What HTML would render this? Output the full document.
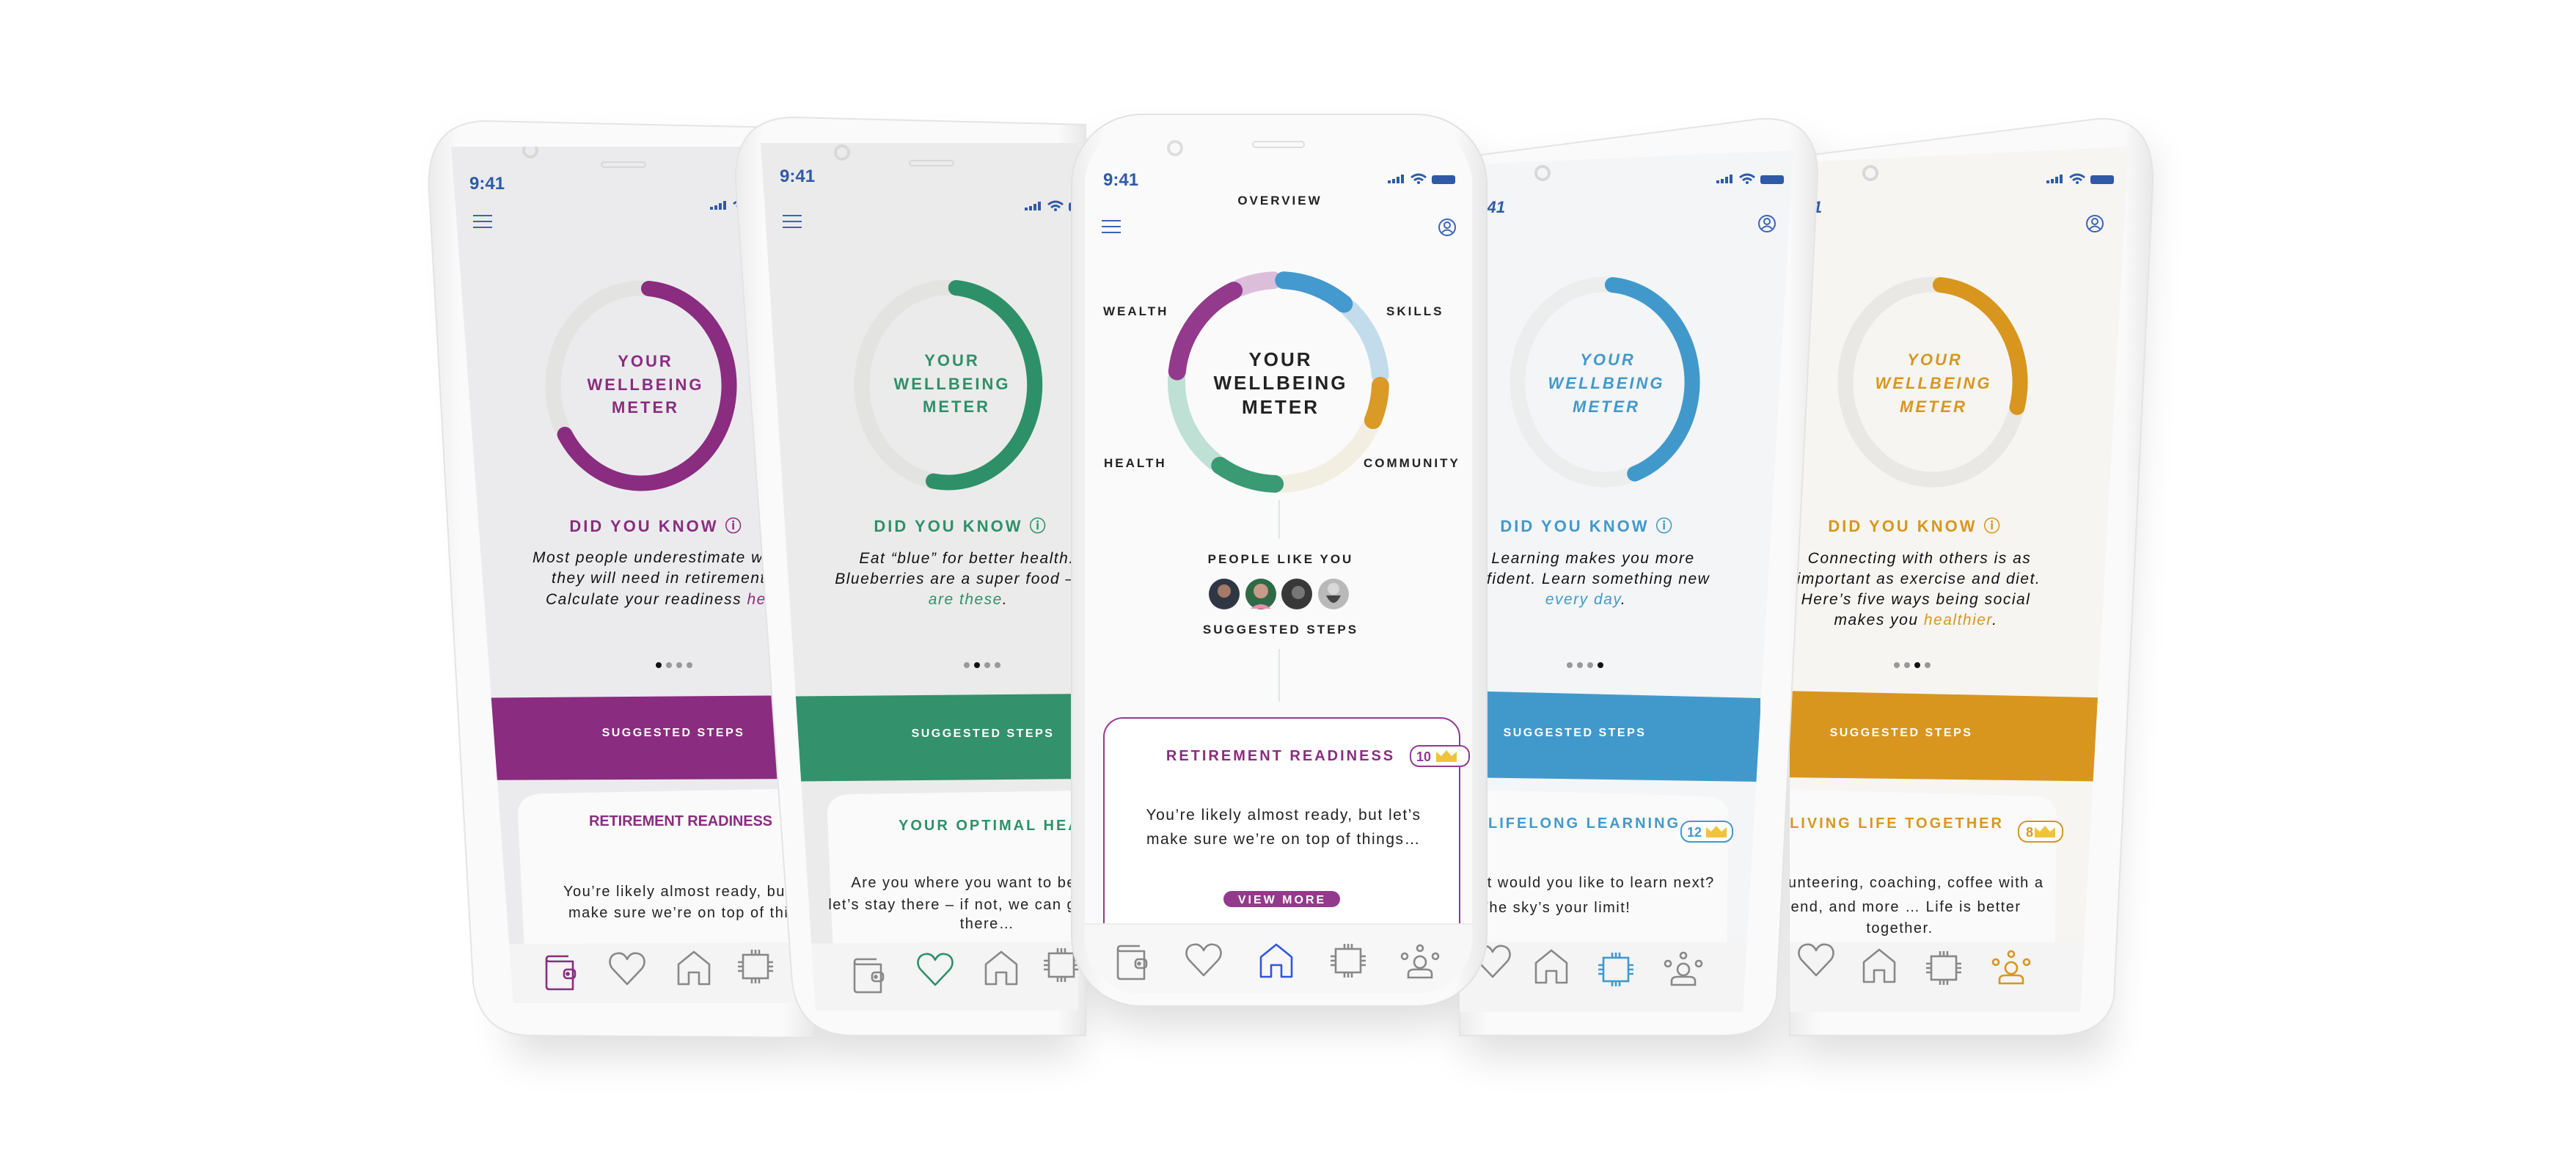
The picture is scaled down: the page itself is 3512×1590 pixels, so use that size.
<!DOCTYPE html>
<html><head><meta charset="utf-8"><style>
html,body{margin:0;padding:0;background:#fff;}
svg{display:block;}
text{font-family:"Liberation Sans","DejaVu Sans",sans-serif;}
</style></head><body>
<svg width="3512" height="1590" viewBox="0 0 3512 1590" xmlns="http://www.w3.org/2000/svg">
<defs>
<filter id="sh" x="-30%" y="-30%" width="160%" height="160%"><feGaussianBlur stdDeviation="28"/></filter>
<linearGradient id="fr" x1="0" y1="0" x2="1" y2="0"><stop offset="0" stop-color="#ececec"/><stop offset=".08" stop-color="#fafafa"/><stop offset=".92" stop-color="#fafafa"/><stop offset="1" stop-color="#e8e8e8"/></linearGradient>
<g id="wallet" fill="none" stroke-width="2.6" stroke-linejoin="round"><path d="M8,-22 H-18 Q-22,-22 -22,-18 V19 Q-22,23 -18,23 H14 V-15 H-18 Q-22,-15 -22,-18"/><rect x="2" y="-4" width="15" height="12" rx="4"/><circle cx="7" cy="2" r="1.5"/></g>
<g id="heart" fill="none" stroke-width="2.6" stroke-linejoin="round"><path d="M0,20 L-19,0 C-27,-8 -24,-21 -13,-22 C-6,-23 -2,-18 0,-14 C2,-18 6,-23 13,-22 C24,-21 27,-8 19,0 Z"/></g>
<g id="home" fill="none" stroke-width="2.6" stroke-linejoin="round"><path d="M-21,22 V-5 L0,-22 L21,-5 V22 H7 V6 H-7 V22 Z"/></g>
<g id="chip" fill="none" stroke-width="2.6"><rect x="-17" y="-16" width="34" height="32"/><path d="M-5,-23V-16M0,-23V-16M5,-23V-16M-5,16V23M0,16V23M5,16V23M-24,-6H-17M-24,0H-17M-24,6H-17M17,-6H24M17,0H24M17,6H24"/></g>
<g id="people" fill="none" stroke-width="2.6"><circle cx="0" cy="2" r="8"/><path d="M-16,23 V18 Q-16,12 -8,12 H8 Q16,12 16,18 V23 Z"/><circle cx="-21" cy="-6" r="4"/><circle cx="0" cy="-17" r="4"/><circle cx="21" cy="-6" r="4"/></g>
<g id="ham" stroke="#3a64b8" stroke-width="2"><path d="M-13,-8H13M-13,0H13M-13,8H13"/></g>
<g id="prof" fill="none" stroke="#3a64b8" stroke-width="2"><circle r="11"/><circle cy="-3" r="4"/><path d="M-7,7 Q0,0 7,7"/></g>
<g id="stat" fill="#2e5aa8"><rect x="0" y="2" width="4" height="4"/><rect x="6" y="0" width="4" height="6"/><rect x="12" y="-3" width="4" height="9"/><rect x="18" y="-6" width="4" height="12"/><path d="M32,-2 Q42,-10 52,-2" stroke="#2e5aa8" stroke-width="3" fill="none"/><path d="M36,2 Q42,-3 48,2" stroke="#2e5aa8" stroke-width="3" fill="none"/><circle cx="42" cy="5" r="2"/><rect x="60" y="-5" width="32" height="12" rx="3"/></g>
<g id="crown" fill="#f0c43a"><path d="M-14,8 L-14,-6 L-7,0 L0,-8 L7,0 L14,-6 L14,8 Z"/></g>
<clipPath id="c1"><path d="M615,200 L1100,200 L1100,1368 L700,1368 Z"/></clipPath>
<clipPath id="c2"><path d="M1037,195 L1470,195 L1470,1378 L1112,1378 Z"/></clipPath>
<clipPath id="c4"><path d="M1990,225 L2445,205 L2376,1380 L1990,1380 Z"/></clipPath>
<clipPath id="c5"><path d="M2440,222 L2902,200 L2836,1380 L2440,1380 Z"/></clipPath>
<clipPath id="cc"><rect x="1479" y="175" width="528" height="1180" rx="75"/></clipPath>
</defs>

<!-- shadows -->
<g filter="url(#sh)" fill="#000" opacity=".13">
<path d="M620,200 L1100,210 L1100,1440 L700,1440 Z"/>
<path d="M1040,200 L1470,210 L1470,1440 L1110,1440 Z"/>
<path d="M2000,240 L2470,200 L2420,1440 L2000,1440 Z"/>
<path d="M2450,240 L2930,200 L2870,1440 L2450,1440 Z"/>
<rect x="1470" y="190" width="550" height="1210" rx="90"/>
</g>

<!-- ============ PHONE 1 (purple) ============ -->
<path d="M660,165 L1110,175 L1110,1415 L720,1412 Q655,1410 645,1340 L585,260 Q580,168 660,165 Z" fill="url(#fr)" stroke="#e4e4e4" stroke-width="2"/>
<g clip-path="url(#c1)">
<rect x="600" y="190" width="520" height="1200" fill="#ebebed"/>
<circle cx="723" cy="205" r="9" fill="none" stroke="#d8d8d8" stroke-width="4"/>
<rect x="820" y="221" width="60" height="7" rx="3.5" fill="none" stroke="#d8d8d8" stroke-width="2"/>
<text x="640" y="258" font-size="24" font-weight="bold" fill="#2e5aa8">9:41</text>
<use href="#ham" x="658" y="302"/>
<use href="#stat" x="968" y="280"/>
<ellipse cx="874" cy="526" rx="120" ry="133" fill="none" stroke="#e3e3e1" stroke-width="21"/>
<path d="M884.5,393.5 A120,133 0 1 1 770.1,592.5" fill="none" stroke="#8a2c80" stroke-width="21" stroke-linecap="round"/>
<g fill="#8a2c80" font-size="22" font-weight="bold" text-anchor="middle" letter-spacing="3"><text x="880" y="500">YOUR</text><text x="880" y="532">WELLBEING</text><text x="880" y="563">METER</text></g>
<text x="895" y="725" font-size="22" font-weight="bold" fill="#8a2c80" text-anchor="middle" letter-spacing="3">DID YOU KNOW ⓘ</text>
<g font-size="21" font-style="italic" fill="#111" letter-spacing="1.5"><text x="726" y="767">Most people underestimate what</text><text x="752" y="795">they will need in retirement.</text><text x="744" y="824">Calculate your readiness <tspan fill="#8a2c80">here</tspan>.</text></g>
<circle cx="898" cy="907" r="4" fill="#111"/><circle cx="912" cy="907" r="4" fill="#999"/><circle cx="926" cy="907" r="4" fill="#999"/><circle cx="940" cy="907" r="4" fill="#999"/>
<path d="M600,952 L1110,948 L1110,1062 L600,1064 Z" fill="#8a2c80"/>
<text x="918" y="1004" font-size="16" font-weight="bold" fill="#fff" text-anchor="middle" letter-spacing="2.5">SUGGESTED STEPS</text>
<path d="M706,1110 Q706,1084 740,1082 L1110,1075 L1110,1400 L720,1400 Z" fill="#fafafa"/>
<text x="803" y="1126" font-size="20" font-weight="bold" fill="#8a2c80" letter-spacing="3" textLength="253">RETIREMENT READINESS</text>
<g font-size="20" fill="#222" letter-spacing="1.5"><text x="768" y="1222">You’re likely almost ready, but let’s</text><text x="775" y="1251">make sure we’re on top of things…</text></g>
<path d="M600,1288 L1110,1285 L1110,1400 L600,1400 Z" fill="#f4f4f4"/>
<g stroke="#888"><use href="#wallet" x="767" y="1326" stroke="#8a2c80"/><use href="#heart" x="855" y="1322"/><use href="#home" x="946" y="1320"/><use href="#chip" x="1030" y="1318"/></g>
</g>

<!-- ============ PHONE 5 (orange) ============ -->
<path d="M2440,215 L2860,162 Q2937,158 2935,250 L2882,1360 Q2872,1412 2800,1412 L2440,1412 Z" fill="url(#fr)" stroke="#e4e4e4" stroke-width="2"/>
<g clip-path="url(#c5)">
<rect x="2430" y="190" width="500" height="1200" fill="#f6f5f1"/>
<circle cx="2550" cy="236" r="9" fill="none" stroke="#d8d8d8" stroke-width="4"/>
<rect x="2635" y="200" width="58" height="7" rx="3.5" fill="none" stroke="#d8d8d8" stroke-width="2"/>
<text x="2440" y="290" font-size="22" font-weight="bold" font-style="italic" fill="#2e5aa8">9:41</text>
<use href="#stat" x="2790" y="244"/>
<use href="#prof" x="2856" y="305"/>
<ellipse cx="2635" cy="521" rx="119" ry="133" fill="none" stroke="#e9e8e4" stroke-width="21"/>
<path d="M2645.4,388.5 A119,133 0 0 1 2750,555.4" fill="none" stroke="#d8961f" stroke-width="21" stroke-linecap="round"/>
<g fill="#d8961f" font-size="22" font-weight="bold" font-style="italic" text-anchor="middle" letter-spacing="3"><text x="2638" y="498">YOUR</text><text x="2636" y="530">WELLBEING</text><text x="2636" y="562">METER</text></g>
<text x="2611" y="725" font-size="22" font-weight="bold" fill="#d8961f" text-anchor="middle" letter-spacing="3">DID YOU KNOW ⓘ</text>
<g font-size="21" font-style="italic" fill="#111" letter-spacing="1.5" text-anchor="middle"><text x="2617" y="768">Connecting with others is as</text><text x="2616" y="796">important as exercise and diet.</text><text x="2612" y="824">Here’s five ways being social</text><text x="2612" y="852">makes you <tspan fill="#d8961f">healthier</tspan>.</text></g>
<circle cx="2586" cy="907" r="4" fill="#999"/><circle cx="2600" cy="907" r="4" fill="#999"/><circle cx="2614" cy="907" r="4" fill="#111"/><circle cx="2628" cy="907" r="4" fill="#999"/>
<path d="M2430,942 L2900,952 L2900,1066 L2430,1060 Z" fill="#d8961f"/>
<text x="2592" y="1004" font-size="16" font-weight="bold" fill="#fff" text-anchor="middle" letter-spacing="2.5">SUGGESTED STEPS</text>
<path d="M2430,1076 L2780,1086 Q2804,1090 2804,1115 L2800,1400 L2430,1400 Z" fill="#fafafa"/>
<text x="2586" y="1129" font-size="20" font-weight="bold" fill="#d8961f" text-anchor="middle" letter-spacing="3">LIVING LIFE TOGETHER</text>
<rect x="2752" y="1120" width="60" height="28" rx="12" fill="#fff" stroke="#d8961f" stroke-width="2"/>
<text x="2762" y="1141" font-size="18" font-weight="bold" fill="#d8961f">8</text><use href="#crown" x="2788" y="1134"/>
<g font-size="20" fill="#222" letter-spacing="1.5" text-anchor="middle"><text x="2596" y="1210">Volunteering, coaching, coffee with a</text><text x="2588" y="1243">friend, and more … Life is better</text><text x="2590" y="1272">together.</text></g>
<path d="M2430,1285 L2860,1285 L2860,1400 L2430,1400 Z" fill="#f4f4f4"/>
<g stroke="#888"><use href="#heart" x="2476" y="1310"/><use href="#home" x="2562" y="1317"/><use href="#chip" x="2650" y="1320"/><use href="#people" x="2742" y="1318" stroke="#d8961f"/></g>
</g>

<!-- ============ PHONE 2 (green) ============ -->
<path d="M1080,160 L1480,170 L1480,1412 L1160,1412 Q1090,1410 1080,1340 L1003,250 Q1000,162 1080,160 Z" fill="url(#fr)" stroke="#e4e4e4" stroke-width="2"/>
<g clip-path="url(#c2)">
<rect x="1030" y="190" width="460" height="1200" fill="#ebebeb"/>
<circle cx="1148" cy="208" r="9" fill="none" stroke="#d8d8d8" stroke-width="4"/>
<rect x="1240" y="219" width="60" height="7" rx="3.5" fill="none" stroke="#d8d8d8" stroke-width="2"/>
<text x="1063" y="248" font-size="24" font-weight="bold" fill="#2e5aa8">9:41</text>
<use href="#ham" x="1080" y="302"/>
<use href="#stat" x="1397" y="281"/>
<ellipse cx="1293" cy="525" rx="118" ry="133" fill="none" stroke="#e3e3e1" stroke-width="21"/>
<path d="M1303.3,392.5 A118,133 0 1 1 1272.5,656" fill="none" stroke="#2e9068" stroke-width="21" stroke-linecap="round"/>
<g fill="#2e9068" font-size="22" font-weight="bold" text-anchor="middle" letter-spacing="3"><text x="1298" y="499">YOUR</text><text x="1298" y="531">WELLBEING</text><text x="1304" y="562">METER</text></g>
<text x="1310" y="725" font-size="22" font-weight="bold" fill="#2e9068" text-anchor="middle" letter-spacing="3">DID YOU KNOW ⓘ</text>
<g font-size="21" font-style="italic" fill="#111" letter-spacing="1.5" text-anchor="middle"><text x="1318" y="768">Eat “blue” for better health.</text><text x="1302" y="796">Blueberries are a super food –</text><text x="1320" y="824" fill="#2e9068">are these<tspan fill="#111">.</tspan></text></g>
<circle cx="1318" cy="907" r="4" fill="#999"/><circle cx="1332" cy="907" r="4" fill="#111"/><circle cx="1346" cy="907" r="4" fill="#999"/><circle cx="1360" cy="907" r="4" fill="#999"/>
<path d="M1030,950 L1480,946 L1480,1062 L1030,1066 Z" fill="#33916b"/>
<text x="1340" y="1005" font-size="16" font-weight="bold" fill="#fff" text-anchor="middle" letter-spacing="2.5">SUGGESTED STEPS</text>
<path d="M1128,1110 Q1128,1084 1160,1083 L1480,1078 L1480,1400 L1140,1400 Z" fill="#fafafa"/>
<text x="1225" y="1132" font-size="20" font-weight="bold" fill="#2e9068" letter-spacing="3">YOUR OPTIMAL HEALTH</text>
<g font-size="20" fill="#222" letter-spacing="1.5" text-anchor="middle"><text x="1320" y="1210">Are you where you want to be?</text><text x="1330" y="1240">let’s stay there – if not, we can get you</text><text x="1346" y="1266">there…</text></g>
<path d="M1030,1287 L1480,1284 L1480,1400 L1030,1400 Z" fill="#f4f4f4"/>
<g stroke="#888"><use href="#wallet" x="1187" y="1330"/><use href="#heart" x="1275" y="1323" stroke="#2e9068"/><use href="#home" x="1365" y="1320"/><use href="#chip" x="1447" y="1316"/></g>
</g>

<!-- ============ PHONE 4 (blue) ============ -->
<path d="M1990,215 L2400,162 Q2478,158 2478,240 L2422,1360 Q2412,1412 2350,1412 L1990,1412 Z" fill="url(#fr)" stroke="#e4e4e4" stroke-width="2"/>
<g clip-path="url(#c4)">
<rect x="1990" y="190" width="480" height="1200" fill="#f3f5f7"/>
<circle cx="2103" cy="236" r="9" fill="none" stroke="#d8d8d8" stroke-width="4"/>
<rect x="2190" y="200" width="58" height="7" rx="3.5" fill="none" stroke="#d8d8d8" stroke-width="2"/>
<text x="2008" y="290" font-size="22" font-weight="bold" font-style="italic" fill="#2e5aa8">9:41</text>
<use href="#stat" x="2340" y="244"/>
<use href="#prof" x="2409" y="305"/>
<ellipse cx="2188" cy="521" rx="119" ry="133" fill="none" stroke="#eceeee" stroke-width="21"/>
<path d="M2198.4,388.5 A119,133 0 0 1 2228.7,646" fill="none" stroke="#4199cb" stroke-width="21" stroke-linecap="round"/>
<g fill="#4199cb" font-size="22" font-weight="bold" font-style="italic" text-anchor="middle" letter-spacing="3"><text x="2192" y="498">YOUR</text><text x="2190" y="530">WELLBEING</text><text x="2190" y="562">METER</text></g>
<text x="2164" y="725" font-size="22" font-weight="bold" fill="#4199cb" text-anchor="middle" letter-spacing="3">DID YOU KNOW ⓘ</text>
<g font-size="21" font-style="italic" fill="#111" letter-spacing="1.5" text-anchor="middle"><text x="2172" y="768">Learning makes you more</text><text x="2160" y="796">confident. Learn something new</text><text x="2162" y="824"><tspan fill="#4199cb">every day</tspan>.</text></g>
<circle cx="2140" cy="907" r="4" fill="#999"/><circle cx="2154" cy="907" r="4" fill="#999"/><circle cx="2168" cy="907" r="4" fill="#999"/><circle cx="2182" cy="907" r="4" fill="#111"/>
<path d="M1990,942 L2400,952 L2400,1066 L1990,1060 Z" fill="#4199cb"/>
<text x="2147" y="1004" font-size="16" font-weight="bold" fill="#fff" text-anchor="middle" letter-spacing="2.5">SUGGESTED STEPS</text>
<path d="M1990,1076 L2330,1086 Q2357,1090 2357,1115 L2352,1400 L1990,1400 Z" fill="#fafafa"/>
<text x="2029" y="1129" font-size="20" font-weight="bold" fill="#4199cb" letter-spacing="3">LIFELONG LEARNING</text>
<rect x="2292" y="1120" width="70" height="28" rx="12" fill="#fff" stroke="#4199cb" stroke-width="2"/>
<text x="2300" y="1141" font-size="18" font-weight="bold" fill="#4199cb">12</text><use href="#crown" x="2340" y="1134"/>
<g font-size="20" fill="#222" letter-spacing="1.5" text-anchor="middle"><text x="2160" y="1210">What would you like to learn next?</text><text x="2120" y="1244">The sky’s your limit!</text></g>
<path d="M1990,1285 L2420,1285 L2420,1400 L1990,1400 Z" fill="#f4f4f4"/>
<g stroke="#888"><use href="#heart" x="2035" y="1312"/><use href="#home" x="2115" y="1318"/><use href="#chip" x="2203" y="1322" stroke="#4199cb"/><use href="#people" x="2295" y="1320"/></g>
</g>

<!-- ============ CENTER PHONE ============ -->
<rect x="1461" y="156" width="566" height="1216" rx="95" fill="url(#fr)" stroke="#e2e2e2" stroke-width="2"/>
<g clip-path="url(#cc)">
<rect x="1479" y="175" width="528" height="1180" fill="#fafafa"/>
<circle cx="1602" cy="202" r="9" fill="none" stroke="#dedede" stroke-width="4"/>
<rect x="1708" y="193" width="70" height="8" rx="4" fill="none" stroke="#dedede" stroke-width="2"/>
<text x="1504" y="253" font-size="24" font-weight="bold" fill="#2e5aa8">9:41</text>
<use href="#stat" x="1892" y="244"/>
<text x="1745" y="279" font-size="17" font-weight="bold" fill="#222" text-anchor="middle" letter-spacing="3">OVERVIEW</text>
<use href="#ham" x="1515" y="309"/>
<use href="#prof" x="1973" y="310"/>
<g font-size="17" font-weight="bold" fill="#222" letter-spacing="3"><text x="1504" y="430">WEALTH</text><text x="1890" y="430">SKILLS</text><text x="1505" y="637">HEALTH</text><text x="1859" y="637">COMMUNITY</text></g>
<g fill="none" stroke-width="24" stroke-linecap="round">
<path d="M1690.9,392.1 A139,139 0 0 1 1735.7,382.2" stroke="#dcbedb"/>
<path d="M1839.6,421.0 A139,139 0 0 1 1881.7,511.3" stroke="#c3dcec"/>
<path d="M1867.9,581.9 A139,139 0 0 1 1747.9,659.9" stroke="#f3eee2"/>
<path d="M1655.5,629.0 A139,139 0 0 1 1604.1,516.1" stroke="#bfe0d4"/>
<path d="M1750.3,382.2 A139,139 0 0 1 1832.3,414.5" stroke="#4499cf"/>
<path d="M1881.9,525.9 A139,139 0 0 1 1871.9,573.1" stroke="#d99a28"/>
<path d="M1738.1,659.9 A139,139 0 0 1 1663.3,634.9" stroke="#3a9a73"/>
<path d="M1604.8,506.5 A139,139 0 0 1 1682.1,396.1" stroke="#933a8c"/>
</g>
<g font-size="26" font-weight="bold" fill="#222" text-anchor="middle" letter-spacing="3"><text x="1746" y="499">YOUR</text><text x="1746" y="531">WELLBEING</text><text x="1746" y="564">METER</text></g>
<path d="M1744,682V734M1744,885V957" stroke="#dfe3ee" stroke-width="2"/>
<text x="1746" y="768" font-size="17" font-weight="bold" fill="#222" text-anchor="middle" letter-spacing="3">PEOPLE LIKE YOU</text>
<circle cx="1669" cy="810" r="21" fill="#2f3744"/><circle cx="1669" cy="806" r="9" fill="#a57a66"/>
<circle cx="1719" cy="810" r="21" fill="#2e6a45"/><circle cx="1719" cy="806" r="10" fill="#c89a88"/><path d="M1705,830 Q1719,818 1733,830" fill="#e48fb0"/>
<circle cx="1768" cy="810" r="21" fill="#383838"/><circle cx="1770" cy="808" r="9" fill="#777"/>
<circle cx="1818" cy="810" r="21" fill="#b9b9b9"/><circle cx="1818" cy="803" r="8" fill="#d8d8d8"/><path d="M1808,812 Q1818,832 1828,812 Z" fill="#444"/>
<text x="1746" y="864" font-size="17" font-weight="bold" fill="#222" text-anchor="middle" letter-spacing="3">SUGGESTED STEPS</text>
<rect x="1505" y="979" width="485" height="310" rx="26" fill="#fff" stroke="#933a8c" stroke-width="2"/>
<text x="1746" y="1037" font-size="20" font-weight="bold" fill="#8a2c80" text-anchor="middle" letter-spacing="3">RETIREMENT READINESS</text>
<rect x="1923" y="1017" width="80" height="28" rx="12" fill="#fff" stroke="#933a8c" stroke-width="2"/>
<text x="1931" y="1038" font-size="18" font-weight="bold" fill="#933a8c">10</text><use href="#crown" x="1972" y="1031"/>
<g font-size="21" fill="#222" text-anchor="middle" letter-spacing="1.5"><text x="1750" y="1118">You’re likely almost ready, but let’s</text><text x="1750" y="1151">make sure we’re on top of things…</text></g>
<rect x="1668" y="1215" width="159" height="22" rx="11" fill="#933a8c"/>
<text x="1748" y="1232" font-size="16" font-weight="bold" fill="#fff" text-anchor="middle" letter-spacing="3">VIEW MORE</text>
<rect x="1479" y="1260" width="528" height="100" fill="#f7f7f7"/>
<path d="M1479,1260H2007" stroke="#ececec" stroke-width="2"/>
<g stroke="#888"><use href="#wallet" x="1546" y="1312"/><use href="#heart" x="1641" y="1310"/><use href="#home" x="1740" y="1310" stroke="#2f55e0"/><use href="#chip" x="1838" y="1310"/><use href="#people" x="1936" y="1310"/></g>
</g>
</svg>
</body></html>
